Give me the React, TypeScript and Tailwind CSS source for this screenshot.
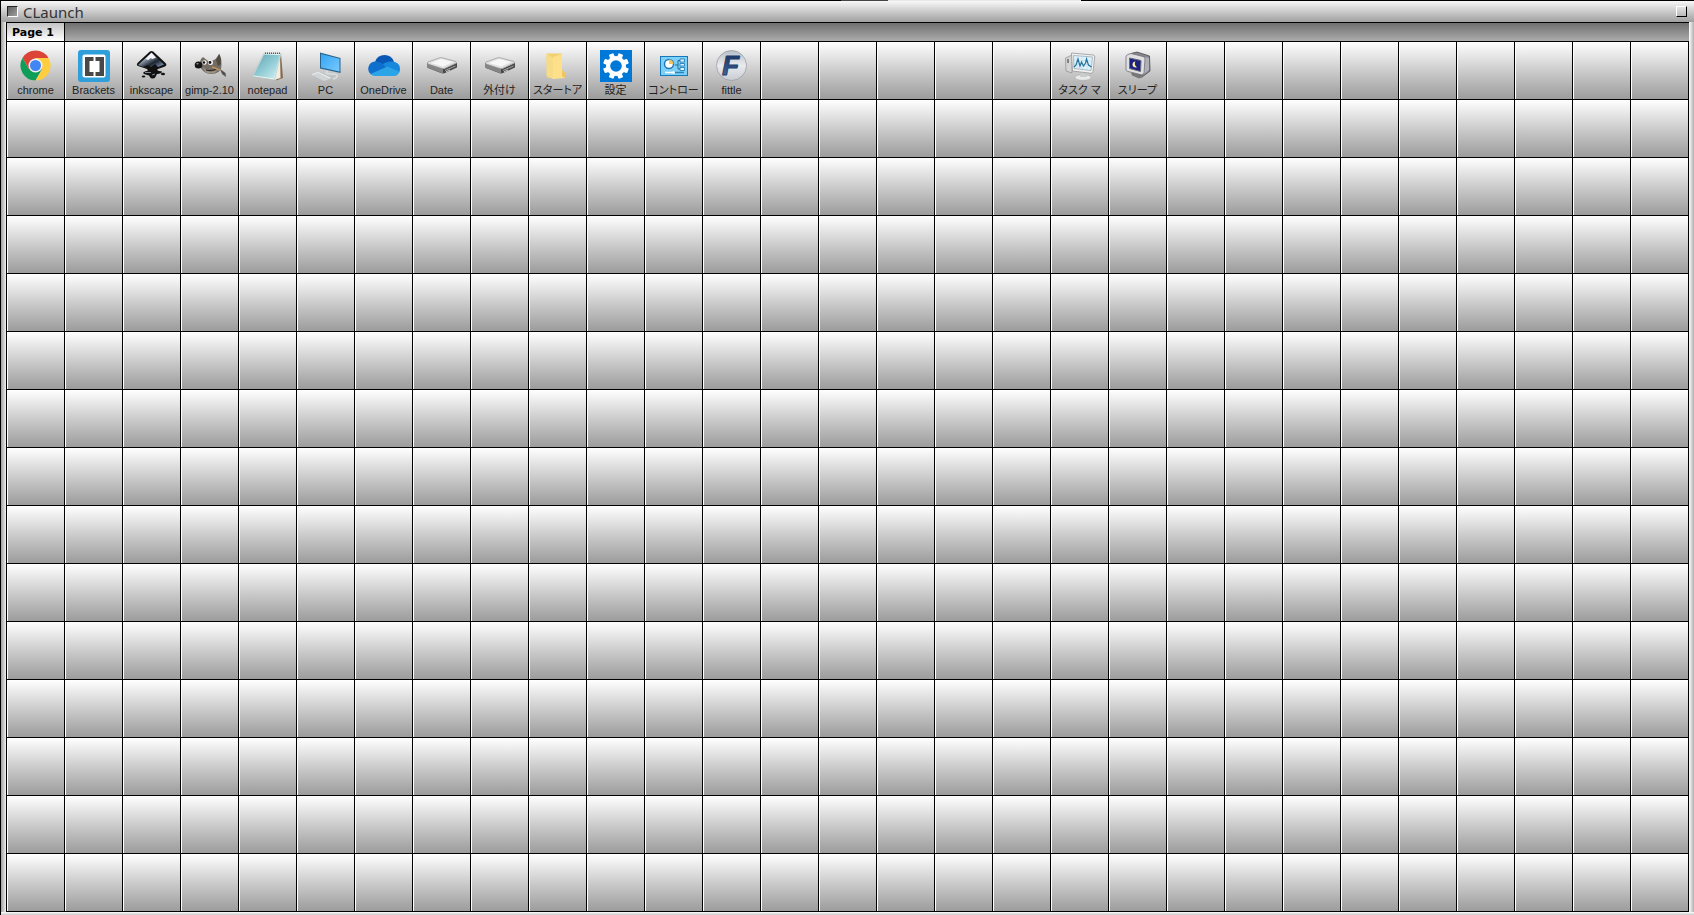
import { useState } from 'react';
import type { ReactNode } from 'react';

const COLUMNS = 29;
const ROWS = 15;

interface LaunchItem {
  column: number;
  label: string;
  icon: ReactNode;
}

function ChromeIcon() {
  return (
    <svg viewBox="0 0 32 32" className="w-8 h-8">
      <path d="M2.5 8A15 15 0 0 1 28.5 8H15.5L9 19.2Z" fill="#db4437" />
      <path d="M2.5 8A15 15 0 0 0 15.5 30.5L22 19.3 15.5 15.5 9 19.2Z" fill="#0f9d58" />
      <path d="M28.5 8A15 15 0 0 1 15.5 30.5L22 19.3 15.5 8Z" fill="#ffcd40" />
      <circle cx="15.5" cy="15.5" r="7" fill="#f1f1f1" />
      <circle cx="15.5" cy="15.5" r="5.5" fill="#4285f4" />
    </svg>
  );
}

function BracketsIcon() {
  return (
    <svg viewBox="0 0 32 32" className="w-8 h-8">
      <rect width="32" height="32" rx="3" fill="#2f9fdb" />
      <rect x="4.5" y="4.5" width="23" height="23" rx="2" fill="#fff" />
      <path d="M7 7h8.500v4h-4v11h4v4H7ZM17.500 7H26v19h-8.500v-4h4V11h-4Z" fill="#484848" />
    </svg>
  );
}

function InkscapeIcon() {
  return (
    <svg viewBox="0 0 32 32" className="w-8 h-8">
      <defs>
        <linearGradient id="ink" x1="0" y1="0" x2="1" y2="1">
          <stop offset="0" stopColor="#fff" />
          <stop offset="0.4" stopColor="#8d98a8" />
          <stop offset="0.65" stopColor="#1c2430" />
          <stop offset="1" stopColor="#8fa6c8" />
        </linearGradient>
      </defs>
      <path d="M13.5 1.8q2-1.600 4 0L29.500 13q2 2-.5 3.500l-7 2.500q-2 1 1 2l3 .5q0 2-5 2.500l-1 2q-1 3-4 2.500-2-.5-3-3l-5-1.500q-2-1.500 1-2.500l3-1-1-1.500-9-3q-2-1-.5-3Z" fill="#111" />
      <path d="M15.5 2.5 28 14.5 22 17l-3-3-4 3-3-2-5 2-5-2Z" fill="url(#ink)" />
      <path d="M9.5 9 15.5 3 20 7.5 16.5 9l-2-1-2 2Z" fill="#f4f6fa" />
      <path d="M9 22.5h6M16 25l3-1" stroke="#7c8797" strokeWidth="1" />
      <ellipse cx="27" cy="24" rx="2" ry="1.2" fill="#111" />
      <ellipse cx="7.5" cy="26.5" rx="1.8" ry="1" fill="#111" />
    </svg>
  );
}

function GimpIcon() {
  return (
    <svg viewBox="0 0 32 32" className="w-8 h-8">
      <path d="M7 9 9 7l5 4q5 .5 7.500-2L25.500 4q2.500 5 2 11 0 5-3 7-4 2.500-8 2-6-.5-9-5-3-5-.5-10Z" fill="#746d63" />
      <path d="M22 10l3-6q2.500 4 2 10l-3 2Z" fill="#514b43" />
      <path d="M9 17q6 7 15 3-3 4-9 3.500-5-1-6-6.500Z" fill="#9c9488" />
      <ellipse cx="4.5" cy="15" rx="3.8" ry="3.5" fill="#151515" />
      <ellipse cx="3.5" cy="13.8" rx="1.2" ry=".8" fill="#999" />
      <circle cx="10.5" cy="12.5" r="2.2" fill="#f5f5f5" />
      <circle cx="10" cy="12.5" r="1.2" fill="#111" />
      <circle cx="16.5" cy="12.500" r="2.500" fill="#f5f5f5" />
      <circle cx="16" cy="12.5" r="1.4" fill="#111" />
      <path d="M12 20q5 1.500 10-1" fill="none" stroke="#2c2824" strokeWidth="1.2" />
      <path d="M18 17l8 3" stroke="#c09463" strokeWidth="1.5" />
      <path d="M26 19 31.500 23 32 27 28 24Z" fill="#55504b" />
    </svg>
  );
}

function NotepadIcon() {
  return (
    <svg viewBox="0 0 32 32" className="w-8 h-8">
      <defs>
        <linearGradient id="note" x1="0" y1="0" x2="1" y2="1">
          <stop offset="0" stopColor="#5fa3b3" />
          <stop offset="0.5" stopColor="#8fcbd4" />
          <stop offset="1" stopColor="#d3f2f2" />
        </linearGradient>
      </defs>
      <path d="M29 4 31 28 24 30.5Z" fill="#806b50" />
      <path d="M28 4 28.500 28 22 30Z" fill="#f2ede2" />
      <path d="M12 3 29 3.500 22.500 30 0.500 26.500Z" fill="#edf4f2" stroke="#a2b3b2" strokeWidth=".5" />
      <path d="M12 4.500 28 5 22 28.500 1.500 25.500Z" fill="url(#note)" />
      <path d="M13 3.200H28" stroke="#565656" strokeWidth="1.4" strokeDasharray="1 1" />
    </svg>
  );
}

function ComputerIcon() {
  return (
    <svg viewBox="0 0 32 32" className="w-8 h-8">
      <defs>
        <linearGradient id="screen" x1="0" y1="0" x2="1" y2="1">
          <stop offset="0" stopColor="#33a5f3" />
          <stop offset="1" stopColor="#79c9ff" />
        </linearGradient>
      </defs>
      <path d="M1 24.5 8 22 22 28 14 31Z" fill="#cfd4d7" />
      <path d="M2 24.5 8 22.5 20 28" fill="none" stroke="#f3f5f6" strokeWidth=".8" />
      <path d="M18 21q-5 3 4 3 8 0 4 4l-3 1" fill="none" stroke="#d8e0e4" strokeWidth="1.5" />
      <path d="M10 2.500 30.500 8V23L10 18.500Z" fill="#28638b" />
      <path d="M11 4 29.500 8.800V21.500L11 17.500Z" fill="url(#screen)" />
    </svg>
  );
}

function OneDriveIcon() {
  return (
    <svg viewBox="0 0 32 32" className="w-8 h-8">
      <path d="M7 12A10 10 0 0 1 26 12L20 18 8 15Z" fill="#0a58b5" />
      <path d="M7 11.500q4-.5 8 2.500L20 17 3 24.500A7.300 7.300 0 0 1 7 11.500Z" fill="#0f6fcc" />
      <path d="M15 14q3-3 9-2.500 8 .5 8 7.500 0 2-1 4L18 18Z" fill="#1788dc" />
      <path d="M2.500 24 19.500 16.500 31.500 21.800q-1.500 4.200-5.500 4.200H7q-3 0-4.500-2Z" fill="#2ba4e8" />
    </svg>
  );
}

function DriveIcon() {
  return (
    <svg viewBox="0 0 32 32" className="w-8 h-8">
      <path d="M1 13 18 19 31 13v4.500L19 23q-2 .8-4 0L2 18q-1-.5-1-2Z" fill="#494949" />
      <path d="M1 13 17 19v4.500L2 18q-1-.5-1-2Z" fill="#858585" />
      <path d="M2 12 13 8q2-.7 4 0L30 11.500q1 .8 0 1.500L19 18.300q-2 .8-4 0L2 14q-1-1 0-2Z" fill="#e0e0e0" stroke="#8b8b8b" strokeWidth=".6" />
      <path d="M5 13 15 9 27 12 17 16.500Z" fill="#f7f7f7" />
      <path d="M19 20.500 29.500 16" stroke="#a7a7a7" strokeWidth="1" />
      <path d="M20 21.800 24 20" stroke="#eee" strokeWidth=".8" />
    </svg>
  );
}

function FolderIcon() {
  return (
    <svg viewBox="0 0 32 32" className="w-8 h-8">
      <path d="M4.5 3.5H20V21L22 23v5H5Z" fill="#f2cf70" />
      <path d="M4.5 3.5 11 8v21L4.5 26Z" fill="#f7dc87" />
      <path d="M11 7 20 4V20l3 3v5l-12 1Z" fill="#ffe08a" />
      <path d="M20 20l3 3v5l-3-2Z" fill="#edc45e" />
    </svg>
  );
}

function SettingsIcon() {
  return (
    <svg viewBox="0 0 32 32" className="w-8 h-8">
      <rect width="32" height="32" fill="#0078d7" />
      <g fill="#fff">
        {[22.5, 67.5, 112.5, 157.5].map((angle) => (
          <rect key={angle} x="13.5" y="3" width="5" height="26" rx="1" transform={`rotate(${angle} 16 16)`} />
        ))}
        <circle cx="16" cy="16" r="10" />
      </g>
      <circle cx="16" cy="16" r="5.8" fill="#0078d7" />
    </svg>
  );
}

function ControlPanelIcon() {
  return (
    <svg viewBox="0 0 32 32" className="w-8 h-8">
      <rect x="2.5" y="6.5" width="27" height="19" fill="#7fd0f8" stroke="#157aba" />
      <circle cx="11" cy="14" r="4.5" fill="#fff" stroke="#207bb4" strokeWidth="1.5" />
      <path d="M11 14V9.5a4.500 4.500 0 0 1 4.500 4.500Z" fill="#f3c45b" />
      <path d="M17 15h3m0-4.500V19m0-8.500h2m-2 8.500h2" fill="none" stroke="#1c6fa3" />
      <path d="M22 9h4.500v3H22ZM22 13.500h4.500v2.500H22ZM22 17.500h4.500v3H22Z" fill="#d8f2ff" stroke="#1874ad" strokeWidth=".8" />
      <path d="M7 22.500h8" stroke="#fff" strokeWidth="1.500" />
      <path d="M17 22.500h9" stroke="#2685bd" strokeWidth="1.500" />
      <circle cx="15.5" cy="22.5" r="1.3" fill="#fff" />
    </svg>
  );
}

function FittleIcon() {
  return (
    <svg viewBox="0 0 32 32" className="w-8 h-8">
      <defs>
        <linearGradient id="fittle" x1="0" y1="0" x2="0" y2="1">
          <stop offset="0" stopColor="#b8bfc9" />
          <stop offset="0.5" stopColor="#e9ebee" />
          <stop offset="1" stopColor="#c7cbd1" />
        </linearGradient>
        <linearGradient id="fittleLetter" x1="0" y1="0" x2="0" y2="1">
          <stop offset="0" stopColor="#152a52" />
          <stop offset="1" stopColor="#4a72ab" />
        </linearGradient>
      </defs>
      <circle cx="15.5" cy="15.5" r="15" fill="url(#fittle)" stroke="#9c9ea3" strokeWidth=".8" />
      <text
        x="6"
        y="25"
        fontFamily="Liberation Sans, sans-serif"
        fontSize="28"
        fontWeight="bold"
        fontStyle="italic"
        fill="url(#fittleLetter)"
        stroke="#233f70"
        strokeWidth="1"
        strokeLinejoin="round"
      >
        F
      </text>
    </svg>
  );
}

function TaskManagerIcon() {
  return (
    <svg viewBox="0 0 32 32" className="w-8 h-8">
      <path d="M1.5 8 8 5v18l-6-2Z" fill="#d4d4d4" stroke="#8c8c8c" strokeWidth=".7" />
      <path d="M3 10h2M3 12h2" stroke="#333" />
      <ellipse cx="19" cy="27.5" rx="8" ry="2.8" fill="#e9e9e9" stroke="#aaa" strokeWidth=".5" />
      <path d="M17 21h5l1 6h-7Z" fill="#c8cccd" />
      <path d="M7.5 3 29 5q2 .3 1.800 2L29 21.500q-.3 2-2 1.800L8.500 21Z" fill="#f1f1f1" stroke="#999" strokeWidth=".8" />
      <path d="M9.500 5.500 28.500 7 27 20.500 10 18.500Z" fill="#dff1fa" stroke="#7f959f" strokeWidth=".6" />
      <path d="M13 6v13M18 6v13M23 7v13M10 10l18 1M10 14l18 1" stroke="#b5d7e6" strokeWidth=".5" />
      <path d="m10 17 2-2 2-6 2 7 1.500-4 2 4 2-3 1-4 2 6 3 2" fill="none" stroke="#25759d" strokeWidth="1.200" />
    </svg>
  );
}

function SleepIcon() {
  return (
    <svg viewBox="0 0 32 32" className="w-8 h-8">
      <path d="M9 3.500 15 2 27.500 6 28 21 20 27 11 24Z" fill="#85878e" stroke="#4d4d4d" strokeWidth=".8" />
      <path d="m22 7 5 1v12l-5 4Z" fill="#b0b1b7" />
      <path d="M9 23 20 24l1 3-4 1.500-7-3Z" fill="#777" />
      <path d="M4 7q0-2 2-2.500L9 3.500l12 3q2 .5 2 2.500L22 23q-.5 2-2.500 1.800L6 21.500q-2-.5-2-2Z" fill="#e0e0e3" stroke="#707078" strokeWidth=".8" />
      <path d="M7.500 8 19 10.500 18.500 21.500 7.500 18.500Z" fill="#1b2280" stroke="#696b77" />
      <path d="M13.500 11.500q-2 3 1.500 6-4.500.5-4.500-3 .3-3 3-3Z" fill="#fff0a2" />
    </svg>
  );
}

const launchItems: LaunchItem[] = [
  { column: 0, label: 'chrome', icon: <ChromeIcon /> },
  { column: 1, label: 'Brackets', icon: <BracketsIcon /> },
  { column: 2, label: 'inkscape', icon: <InkscapeIcon /> },
  { column: 3, label: 'gimp-2.10', icon: <GimpIcon /> },
  { column: 4, label: 'notepad', icon: <NotepadIcon /> },
  { column: 5, label: 'PC', icon: <ComputerIcon /> },
  { column: 6, label: 'OneDrive', icon: <OneDriveIcon /> },
  { column: 7, label: 'Date', icon: <DriveIcon /> },
  { column: 8, label: '外付け', icon: <DriveIcon /> },
  { column: 9, label: 'スタートア', icon: <FolderIcon /> },
  { column: 10, label: '設定', icon: <SettingsIcon /> },
  { column: 11, label: 'コントロー', icon: <ControlPanelIcon /> },
  { column: 12, label: 'fittle', icon: <FittleIcon /> },
  { column: 18, label: 'タスク マ', icon: <TaskManagerIcon /> },
  { column: 19, label: 'スリープ', icon: <SleepIcon /> },
];

function TitleBar() {
  return (
    <header className="flex items-center justify-between h-[21px] pl-[6px] pr-[7px] bg-linear-to-b from-[#f8f8f8] to-[#a0a0a0]">
      <div className="flex items-center gap-[5px]">
        <button
          aria-label="Menu"
          className="w-[11px] h-[11px] border border-t-[#222] border-l-[#222] border-r-white border-b-white bg-linear-to-br from-[#606060] to-[#a0a0a0]"
        />
        <h1 className="text-[15px] leading-[20px] text-[#333]">CLaunch</h1>
      </div>
      <button
        aria-label="Maximize"
        className="w-[11px] h-[11px] border border-t-white border-l-white border-r-black border-b-black bg-linear-to-b from-[#e4e4e4] to-[#b8b8b8]"
      />
    </header>
  );
}

function LaunchCell({ item }: { item?: LaunchItem }) {
  if (!item) {
    return (
      <div className="h-[58px] border-r border-b border-black bg-linear-to-b from-white to-[#9c9c9c]">
        <div className="h-full border-l border-white" />
      </div>
    );
  }
  return (
    <button className="h-[58px] overflow-hidden border-r border-b border-black bg-linear-to-b from-white to-[#9c9c9c]">
      <span className="flex flex-col items-center h-full pt-2 pr-px border-l border-white">
        {item.icon}
        <span className="font-['Liberation_Sans','Noto_Sans_CJK_JP',sans-serif] text-[11px] leading-[16px] whitespace-nowrap text-[#222] [font-feature-settings:'palt']">
          {item.label}
        </span>
      </span>
    </button>
  );
}

export default function App() {
  const [page, setPage] = useState(1);

  const cells = Array.from({ length: COLUMNS * ROWS }, (_, index) =>
    launchItems.find((item) => item.column === index)
  );

  return (
    <div className="min-h-screen font-['Noto_Sans',sans-serif] border-l border-black bg-[#d0d0d0]">
      {/* Sliver of the windows behind */}
      <div className="flex h-px bg-black">
        <div className="w-[49.6%]" />
        <div className="w-[2.8%] bg-[#444]" />
        <div className="w-[11.4%] bg-[#e8e8e8]" />
      </div>
      <TitleBar />

      <main className="flex">
        <div className="w-[5px] bg-linear-to-r from-[#a0a0a0] to-[#f0f0f0]" />
        <div className="flex-1 border-l border-t border-black">
          <nav className="flex h-[18px] bg-linear-to-b from-[#707070] to-[#acacac]">
            <button
              onClick={() => setPage(1)}
              aria-pressed={page === 1}
              className="w-[58px] pt-px pr-[5px] border-r border-black bg-linear-to-b from-[#c4c4c4] to-white font-['DejaVu_Sans',sans-serif] font-bold text-[11px] leading-[17px] text-black"
            >
              Page 1
            </button>
          </nav>
          <div className="grid grid-cols-[repeat(29,minmax(0,1fr))] border-t border-black">
            {cells.map((item, index) => (
              <LaunchCell key={index} item={item} />
            ))}
          </div>
        </div>
        <div className="w-[5px] bg-linear-to-r from-white to-[#b0b0b0]" />
      </main>
      <footer className="h-[3px] bg-linear-to-b from-white to-[#c8c8c8]" />
    </div>
  );
}
